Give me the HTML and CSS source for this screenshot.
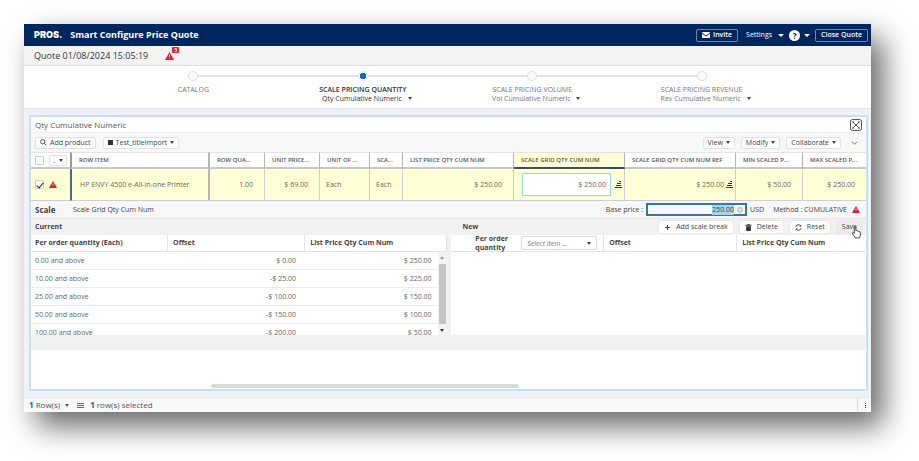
FILE: index.html
```
<!DOCTYPE html>
<html lang="en">
<head>
    <meta charset="UTF-8">
    <meta name="viewport" content="width=device-width, initial-scale=1.0">
    <title>Smart Configure Price Quote</title>
    <link rel="stylesheet" href="styles.css">
</head>
<body>
    <div class="app">
        <header class="topbar">
            <span class="logo">PROS.</span>
            <h1>Smart Configure Price Quote</h1>
            <nav class="topbar-actions">
                <button class="outline-btn invite">
                    <svg class="mail" viewBox="0 0 16 12"><path d="M0 1.5Q0 0 1.5 0h13Q16 0 16 1.5L8 7 0 1.5zM0 3.6l8 5.6 8-5.6v7Q16 12 14.5 12h-13Q0 12 0 10.500z" fill="#fff"/></svg>
                    Invite
                </button>
                <button class="link-btn">Settings <span class="caret"></span></button>
                <button class="link-btn help"><span class="help-icon">?</span> <span class="caret"></span></button>
                <button class="outline-btn">Close Quote</button>
            </nav>
        </header>

        <div class="quote-bar">
            <h2>Quote 01/08/2024 15:05:19</h2>
            <span class="alert">
                <svg class="warn" viewBox="0 0 16 14"><path d="M8 0L16 14H0z" fill="#d9232e"/><path d="M7.200 4.500h1.600v4.500h-1.600zM7.200 10.500h1.600v1.600h-1.600z" fill="#fff"/></svg>
                <span class="badge">3</span>
            </span>
        </div>

        <ol class="stepper">
            <li class="step">
                <span class="node"></span>
                <span class="step-name">CATALOG</span>
            </li>
            <li class="step active">
                <span class="node"></span>
                <span class="step-name">SCALE PRICING QUANTITY</span>
                <button class="step-sub">Qty Cumulative Numeric <span class="caret"></span></button>
            </li>
            <li class="step">
                <span class="node"></span>
                <span class="step-name">SCALE PRICING VOLUME</span>
                <button class="step-sub">Vol Cumulative Numeric <span class="caret"></span></button>
            </li>
            <li class="step">
                <span class="node"></span>
                <span class="step-name">SCALE PRICING REVENUE</span>
                <button class="step-sub">Rev Cumulative Numeric <span class="caret"></span></button>
            </li>
        </ol>

        <main class="content">
            <section class="panel">
                <div class="panel-title">
                    <h3>Qty Cumulative Numeric</h3>
                    <button class="expand" aria-label="Expand">
                        <svg viewBox="0 0 12 12" fill="none" stroke="#555"><rect x=".5" y=".5" width="11" height="11" rx="2"/><path d="M2.500 2.500l7 7M9.500 2.500l-7 7"/><path d="M2.500 4v-1.500h1.500M8 2.500h1.500v1.500M2.500 8v1.500h1.500M8 9.500h1.500v-1.500" stroke-width=".5"/></svg>
                    </button>
                </div>

                <div class="toolbar">
                    <button class="btn">
                        <svg class="icon" viewBox="0 0 14 14" fill="none" stroke="#444" stroke-width="1.800"><circle cx="5.500" cy="5.500" r="4.300"/><path d="M8.800 8.800L13 13"/></svg>
                        Add product
                    </button>
                    <button class="btn"><span class="square"></span>Test_titleImport <span class="caret"></span></button>
                    <div class="toolbar-right">
                        <button class="btn">View <span class="caret"></span></button>
                        <button class="btn">Modify <span class="caret"></span></button>
                        <button class="btn">Collaborate <span class="caret"></span></button>
                        <button class="chevron" aria-label="More">
                            <svg viewBox="0 0 10 6" fill="none" stroke="#555" stroke-width="1.200"><path d="M1 1l4 4 4-4"/></svg>
                        </button>
                    </div>
                </div>

                <table class="grid">
                    <colgroup>
                        <col class="c-select"><col class="c-item"><col class="c-qty"><col class="c-qty"><col class="c-unit"><col class="c-scale"><col class="c-wide"><col class="c-wide"><col class="c-wide"><col class="c-price"><col>
                    </colgroup>
                    <thead>
                        <tr>
                            <th class="select-cell">
                                <div class="cell-row">
                                    <input type="checkbox" aria-label="Select all">
                                    <button class="btn mini">_ <span class="caret"></span></button>
                                </div>
                            </th>
                            <th class="dark-edge">ROW ITEM</th>
                            <th>ROW QUA...</th>
                            <th>UNIT PRICE...</th>
                            <th>UNIT OF ...</th>
                            <th>SCA...</th>
                            <th>LIST PRICE QTY CUM NUM</th>
                            <th class="current">SCALE GRID QTY CUM NUM</th>
                            <th>SCALE GRID QTY CUM NUM REF</th>
                            <th>MIN SCALED P...</th>
                            <th>MAX SCALED P...</th>
                        </tr>
                    </thead>
                    <tbody>
                        <tr>
                            <td class="select-cell">
                                <div class="cell-row">
                                    <input type="checkbox" aria-label="Select row" checked>
                                    <svg class="warn small" viewBox="0 0 16 14"><path d="M8 0L16 14H0z" fill="#d9232e"/><path d="M7.200 5h1.600v4h-1.600z" fill="#fff"/></svg>
                                </div>
                            </td>
                            <td class="dark-edge item">HP ENVY 4500 e-All-in-one Printer</td>
                            <td class="num">1.00</td>
                            <td class="num">$ 69.00</td>
                            <td>Each</td>
                            <td>Each</td>
                            <td class="num">$ 250.00</td>
                            <td class="edit-cell">
                                <div class="cell-row">
                                    <input class="cell-input" type="text" value="$ 250.00" aria-label="Scale grid qty cum num">
                                    <svg class="stairs" viewBox="0 0 7 7"><path d="M4 0h2v1H4zM2 2h4v1H2zM1 4h5v1H1zM0 6h7v1H0z" fill="#333"/></svg>
                                </div>
                            </td>
                            <td class="ref-cell">
                                <div class="cell-row end">
                                    $ 250.00
                                    <svg class="stairs" viewBox="0 0 7 7"><path d="M4 0h2v1H4zM2 2h4v1H2zM1 4h5v1H1zM0 6h7v1H0z" fill="#333"/></svg>
                                </div>
                            </td>
                            <td class="num">$ 50.00</td>
                            <td class="num">$ 250.00</td>
                        </tr>
                    </tbody>
                </table>

                <div class="scale-bar">
                    <h4>Scale</h4>
                    <span>Scale Grid Qty Cum Num</span>
                    <div class="base-price">
                        <label for="basePrice">Base price :</label>
                        <span class="price-field">
                            <input id="basePrice" type="text" value="250.00">
                            <span class="clear"></span>
                        </span>
                        <span>USD</span>
                        <span class="method">Method : CUMULATIVE</span>
                        <svg class="warn small" viewBox="0 0 16 14"><path d="M8 0L16 14H0z" fill="#d9232e"/><path d="M7.200 5h1.600v4h-1.600z" fill="#fff"/></svg>
                    </div>
                </div>

                <div class="scales">
                    <section class="scale current-scale">
                        <div class="scale-head"><h5>Current</h5></div>
                        <div class="scale-body">
                            <table class="breaks">
                                <thead>
                                    <tr><th>Per order quantity (Each)</th><th>Offset</th><th>List Price Qty Cum Num</th></tr>
                                </thead>
                            </table>
                            <div class="scroll-area">
                                <table class="breaks">
                                    <tbody>
                                        <tr><td>0.00 and above</td><td>$ 0.00</td><td>$ 250.00</td></tr>
                                        <tr><td>10.00 and above</td><td>-$ 25.00</td><td>$ 225.00</td></tr>
                                        <tr><td>25.00 and above</td><td>-$ 100.00</td><td>$ 150.00</td></tr>
                                        <tr><td>50.00 and above</td><td>-$ 150.00</td><td>$ 100.00</td></tr>
                                        <tr><td>100.00 and above</td><td>-$ 200.00</td><td>$ 50.00</td></tr>
                                    </tbody>
                                </table>
                                <div class="vscroll">
                                    <span class="caret up"></span>
                                    <span class="thumb"></span>
                                    <span class="caret"></span>
                                </div>
                            </div>
                        </div>
                    </section>
                    <section class="scale new-scale">
                        <div class="scale-head">
                            <h5>New</h5>
                            <div class="scale-actions">
                                <button class="btn">
                                    <svg class="icon" viewBox="0 0 14 14" stroke="#444" stroke-width="2"><path d="M7 2v10M2 7h10"/></svg>
                                    Add scale break
                                </button>
                                <button class="btn">
                                    <svg class="icon" viewBox="0 0 14 14" fill="#333"><path d="M5 0h4v1.500h4v2H1v-2h4zM2 4.500h10L11.500 14h-9z"/></svg>
                                    Delete
                                </button>
                                <button class="btn reset">
                                    <svg class="icon" viewBox="0 0 14 14" fill="none" stroke="#333" stroke-width="1.800"><path d="M1.500 6A5.500 5.500 0 0 1 11.500 4M12.500 8A5.500 5.500 0 0 1 2.500 10"/><path d="M12.500 1v4h-4zM1.500 13V9h4z" fill="#333" stroke="none"/></svg>
                                    Reset
                                </button>
                                <button class="btn save">Save
                                    <svg class="pointer" viewBox="0 0 20 28" fill="#fff" stroke="#333" stroke-width="2"><path d="M5 2q2-2 3.500 0v8q3-1.500 4 1 2.500-.8 3 1 3-.5 3 2v6q0 3-2 6H7q-1-3-5-8-2-3 0-4 1.500-.5 3 2z"/></svg>
                                </button>
                            </div>
                        </div>
                        <div class="scale-body">
                            <table class="breaks">
                                <thead>
                                    <tr>
                                        <th>
                                            <div class="unit-pick">
                                                <label for="unitSelect">Per order quantity</label>
                                                <span class="select-wrap">
                                                    <select id="unitSelect"><option>Select item ...</option></select>
                                                    <span class="caret"></span>
                                                </span>
                                            </div>
                                        </th>
                                        <th>Offset</th>
                                        <th>List Price Qty Cum Num</th>
                                    </tr>
                                </thead>
                            </table>
                        </div>
                    </section>
                </div>

                <div class="hscroll"><div class="hthumb"></div></div>
            </section>
        </main>

        <footer class="statusbar">
            <span><b>1</b> Row(s)</span>
            <span class="caret"></span>
            <svg class="lines" viewBox="0 0 7 5"><path d="M0 0h7v1H0zM0 2h7v1H0zM0 4h7v1H0z" fill="#666"/></svg>
            <span><b>1</b> row(s) selected</span>
            <button class="more" aria-label="More options">
                <svg viewBox="0 0 1 5" fill="#333"><path d="M0 0h1v1H0zM0 2h1v1H0zM0 4h1v1H0z"/></svg>
            </button>
        </footer>
    </div>
    <script>
        const basePrice = document.getElementById('basePrice');
        basePrice.focus();
        basePrice.select();
    </script>
</body>
</html>
```
FILE: styles.css
```
* {
    box-sizing: border-box;
}

body {
    margin: 0;
    display: flex;
    min-height: 100vh;
    background-color: #fff;
    font-family: "Open Sans", "Noto Sans", sans-serif;
    font-size: 7px;
    line-height: 10px;
    color: #555;
}

h1, h2, h3, h4, h5 {
    margin: 0;
    font-size: inherit;
}

button, input, select {
    margin: 0;
    padding: 0;
    border: 0;
    background: none;
    font: inherit;
    color: inherit;
    outline: none;
}

button {
    cursor: pointer;
    white-space: nowrap;
}

svg {
    display: block;
    flex: none;
}

.caret {
    display: inline-block;
    flex: none;
    border: 2px solid transparent;
    border-top: 3px solid currentColor;
    border-bottom: 0;
}

.caret.up {
    border-top: 0;
    border-bottom: 3px solid #999;
}

.app {
    flex: 1;
    min-width: 0;
    display: flex;
    flex-direction: column;
    margin: 24px 48px 49px 24px;
    background-color: #f2f2f2;
    box-shadow: 12px 14px 28px rgba(0, 0, 0, 0.6);
}

/* top bar */
.topbar {
    display: flex;
    align-items: center;
    height: 22px;
    padding: 0 3px 0 10px;
    background-color: #00265f;
    color: #fff;
}

.logo {
    font-family: Inter, sans-serif;
    font-weight: 900;
    font-size: 9px;
}

.topbar h1 {
    margin-left: 8px;
    font-size: 9px;
    font-weight: 700;
}

.topbar-actions {
    display: flex;
    align-items: center;
    margin-left: auto;
}

.outline-btn {
    display: flex;
    align-items: center;
    gap: 3px;
    height: 13px;
    padding: 0 5px;
    border: 1px solid #7087ad;
    border-radius: 2px;
    font-weight: 600;
}

.mail {
    width: 8px;
    height: 6px;
}

.link-btn {
    display: flex;
    align-items: center;
    gap: 6px;
    margin-left: 8px;
}

.link-btn .caret {
    border-width: 3px 3px 0;
}

.link-btn.help {
    gap: 4px;
    margin: 0 5px;
}

.help-icon {
    width: 11px;
    height: 11px;
    border-radius: 50%;
    background-color: #fff;
    color: #00265f;
    font-size: 8px;
    font-weight: 700;
    line-height: 11px;
}

/* quote bar */
.quote-bar {
    display: flex;
    align-items: center;
    height: 20px;
    padding: 0 10px;
    background-color: #f3f3f3;
    border-bottom: 1px solid #ddd;
}

.quote-bar h2 {
    font-size: 9px;
    font-weight: 400;
    color: #333;
}

.alert {
    position: relative;
    margin-left: 17px;
}

.warn {
    width: 9px;
    height: 8px;
}

.warn.small {
    width: 8px;
    height: 7px;
}

.badge {
    position: absolute;
    left: 7px;
    top: -5px;
    width: 7px;
    height: 6px;
    border-radius: 1px;
    background-color: #d9232e;
    color: #fff;
    font-size: 5px;
    font-weight: 700;
    line-height: 6px;
    text-align: center;
}

/* stepper */
.stepper {
    display: flex;
    margin: 0;
    padding: 5px 10%;
    height: 43px;
    list-style: none;
    background-color: #fff;
    border-bottom: 1px solid #e4e4e4;
    color: #777;
    line-height: 9px;
}

.step {
    position: relative;
    flex: 1;
    display: flex;
    flex-direction: column;
    align-items: center;
    white-space: nowrap;
}

.step + .step::before {
    content: '';
    position: absolute;
    top: 4px;
    right: calc(50% + 5px);
    width: calc(100% - 10px);
    height: 2px;
    background-color: #e4e4e4;
}

.node {
    width: 10px;
    height: 10px;
    margin-bottom: 4px;
    border: 1px solid #ddd;
    border-radius: 50%;
    background-color: #fff;
}

.step-sub {
    margin-left: 8px;
}

.step-sub .caret {
    margin: 0 0 1px 4px;
    color: #444;
}

.active {
    color: #333;
}

.active .node {
    background: radial-gradient(#1167b1 0 3px, #fff 3px);
}

.active .step-name {
    font-weight: 600;
}

/* panel */
.content {
    flex: 1;
    display: flex;
    padding: 6px 3px 6px 5px;
    background-color: #eef2f7;
}

.panel {
    flex: 1;
    min-width: 0;
    display: flex;
    flex-direction: column;
    border: 2px solid #c5e2f1;
    border-radius: 2px;
    background-color: #fff;
}

.panel-title {
    display: flex;
    align-items: center;
    justify-content: space-between;
    height: 16px;
    padding: 0 4px;
    border-bottom: 1px solid #eee;
}

.panel-title h3 {
    font-size: 8px;
    font-weight: 400;
}

.expand svg {
    width: 12px;
    height: 12px;
}

.toolbar {
    display: flex;
    align-items: center;
    gap: 7px;
    height: 19px;
    padding: 0 8px 0 4px;
    background-color: #f7f7f7;
}

.toolbar-right {
    display: flex;
    align-items: center;
    gap: 6px;
    margin-left: auto;
}

.btn {
    display: flex;
    align-items: center;
    gap: 3px;
    height: 12px;
    padding: 0 4px;
    border: 1px solid #e2e2e2;
    border-radius: 2px;
    background-color: #fff;
    color: #444;
}

.icon {
    width: 7px;
    height: 7px;
}

.square {
    width: 5px;
    height: 5px;
    background-color: #333;
}

.chevron {
    margin-left: 4px;
}

.chevron svg {
    width: 7px;
    height: 4px;
}

/* product grid */
.grid {
    width: 100%;
    table-layout: fixed;
    border-collapse: separate;
    border-spacing: 0;
}

.c-select {
    width: 39px;
}

.c-item {
    width: 140px;
}

.c-qty {
    width: 55px;
}

.c-unit {
    width: 50px;
}

.c-scale {
    width: 33px;
}

.c-wide {
    width: 111px;
}

.c-price {
    width: 67px;
}

.grid th {
    height: 17px;
    padding: 0 0 0 7px;
    border-top: 1px solid #e4e4e4;
    border-right: 1px solid #b5b5b5;
    border-bottom: 2px solid #c8c8c8;
    background-color: #fff;
    font-size: 6px;
    font-weight: 600;
    text-align: left;
    white-space: nowrap;
    overflow: hidden;
    color: #555;
}

.grid th.current {
    border-bottom-color: #3d4f5c;
    background-color: #ffffd6;
}

.grid td {
    height: 32px;
    padding: 0 0 0 6px;
    border-right: 1px solid #cfcfcf;
    border-bottom: 1px solid #cfcfcf;
    background-color: #ffffd6;
    white-space: nowrap;
    color: #666;
}

.grid .select-cell {
    padding: 0 0 0 4px;
    border-right: 0;
}

.grid .dark-edge {
    border-left: 2px solid #4b6a86;
    border-right: 2px solid #b5b5b5;
}

.grid th.dark-edge {
    border-left-color: #999;
}

.grid td.item {
    padding-left: 8px;
}

.grid td.num {
    padding-right: 11px;
    text-align: right;
}

.grid th:last-child,
.grid td:last-child {
    border-right: 0;
}

.cell-row {
    display: flex;
    align-items: center;
    gap: 5px;
}

.cell-row.end {
    justify-content: flex-end;
    gap: 2px;
}

.grid input[type="checkbox"] {
    appearance: none;
    flex: none;
    width: 9px;
    height: 9px;
    border: 1px solid #ccc;
    border-radius: 1px;
    background-color: #fff;
}

.grid input[type="checkbox"]:checked::before {
    content: '';
    display: block;
    width: 3px;
    height: 6px;
    margin-left: 2px;
    border: solid #222;
    border-width: 0 1px 1px 0;
    transform: rotate(40deg);
}

.btn.mini {
    height: 11px;
    padding: 0 3px;
}

.grid .edit-cell {
    padding: 0 2px 0 8px;
}

.grid .ref-cell {
    padding-right: 2px;
}

.cell-input {
    flex: 1;
    min-width: 0;
    height: 23px;
    padding: 0 4px;
    border: 1px solid #9ad4ec;
    border-radius: 1px;
    background-color: #fff;
    text-align: right;
    box-shadow: 0 0 1px #9ad4ec;
}

.stairs {
    width: 7px;
    height: 7px;
}

.edit-cell .cell-row {
    gap: 4px;
}

/* scale bar */
.scale-bar {
    display: flex;
    align-items: center;
    height: 17px;
    padding: 0 6px 0 4px;
    background-color: #f7f7f7;
    color: #444;
}

.scale-bar h4 {
    width: 38px;
    font-size: 8px;
}

.base-price {
    display: flex;
    align-items: center;
    gap: 3px;
    margin-left: auto;
}

.price-field {
    display: flex;
    align-items: center;
    gap: 3px;
    width: 101px;
    height: 13px;
    padding: 0 2px;
    border: 2px solid #3a75a8;
    background-color: #f3f9fd;
}

.price-field input {
    flex: 1;
    min-width: 0;
    text-align: right;
    caret-color: transparent;
}

.price-field input::selection {
    background-color: #a6d3f2;
    color: #444;
}

.clear {
    width: 6px;
    height: 6px;
    border-radius: 50%;
    border: 1px solid #bbb;
    background-color: #ddd;
}

.method {
    margin: 0 2px 0 6px;
}

/* current and new scales */
.scales {
    display: flex;
    gap: 4px;
    padding-bottom: 15px;
    background-color: #f1f1f1;
    border-top: 1px solid #e4e4e4;
}

.scale {
    flex: 1;
    min-width: 0;
    display: flex;
    flex-direction: column;
}

.scale-head {
    display: flex;
    align-items: center;
    justify-content: space-between;
    height: 16px;
    padding: 0 3px 0 4px;
    color: #444;
}

.new-scale .scale-head {
    padding-left: 12px;
}

.scale-actions {
    display: flex;
    gap: 5px;
}

.scale-actions .btn {
    height: 14px;
    gap: 5px;
    padding: 0 5px;
    border-color: #e8e8e8;
}

.scale-actions .save {
    position: relative;
    background-color: #ececec;
}

.pointer {
    position: absolute;
    right: 1px;
    top: 5px;
    width: 9px;
    height: 13px;
}

.scale-body {
    flex: 1;
    background-color: #fff;
}

.breaks {
    width: 100%;
    table-layout: fixed;
    border-spacing: 0;
}

.breaks th {
    width: 33%;
    height: 17px;
    padding: 0 0 0 5px;
    border-right: 1px solid #e4e4e4;
    border-bottom: 1px solid #e4e4e4;
    text-align: left;
    color: #444;
}

.breaks th:first-child {
    padding-left: 4px;
}

.new-scale .breaks th {
    width: 32%;
}

.new-scale .breaks th:first-child {
    width: 37%;
}

.breaks th:last-child {
    width: auto;
}

.new-scale .breaks th:last-child {
    border-right: 0;
}

.scroll-area {
    display: flex;
    height: 83px;
    overflow: hidden;
}

.scroll-area .breaks {
    flex: 1;
    height: 90px;
}

.breaks td {
    height: 18px;
    padding: 0 6px 0 4px;
    border-bottom: 1px solid #ebebeb;
    text-align: right;
    color: #666;
}

.breaks td:first-child {
    text-align: left;
}

.breaks td:nth-child(2) {
    padding-right: 6px;
}

.vscroll {
    width: 9px;
    display: flex;
    flex-direction: column;
    align-items: center;
    justify-content: space-between;
    padding: 4px 1px 3px;
    background-color: #f3f3f3;
    color: #333;
}

.thumb {
    width: 7px;
    height: 60px;
    background-color: #c4c4c4;
}

.unit-pick {
    display: flex;
    align-items: center;
    justify-content: flex-end;
    gap: 8px;
    height: 16px;
    padding-right: 6px;
    line-height: 9px;
}

.unit-pick label {
    width: 38px;
}

.select-wrap {
    position: relative;
    width: 76px;
}

.select-wrap select {
    appearance: none;
    display: block;
    width: 100%;
    height: 14px;
    padding: 0 5px;
    border: 1px solid #ddd;
    border-radius: 2px;
    background-color: #fff;
    font-weight: 400;
    font-style: italic;
    color: #777;
}

.select-wrap .caret {
    position: absolute;
    right: 6px;
    top: 6px;
}

.hscroll {
    margin-top: auto;
    padding-left: 180px;
}

.hthumb {
    width: 47%;
    height: 4px;
    margin-bottom: 1px;
    border-radius: 2px;
    background-color: #d9d9d9;
}

/* status bar */
.statusbar {
    display: flex;
    align-items: center;
    height: 15px;
    padding-left: 5px;
    background-color: #f8f8f8;
    border-top: 1px solid #e8e8e8;
    font-size: 8px;
}

.statusbar b {
    color: #1167b1;
}

.statusbar .caret {
    margin: 0 8px 0 5px;
}

.lines {
    width: 7px;
    height: 5px;
    margin-right: 6px;
}

.more {
    align-self: stretch;
    width: 14px;
    margin-left: auto;
    padding-left: 7px;
    border-left: 1px solid #ddd;
}

.more svg {
    width: 1px;
    height: 5px;
}
```
